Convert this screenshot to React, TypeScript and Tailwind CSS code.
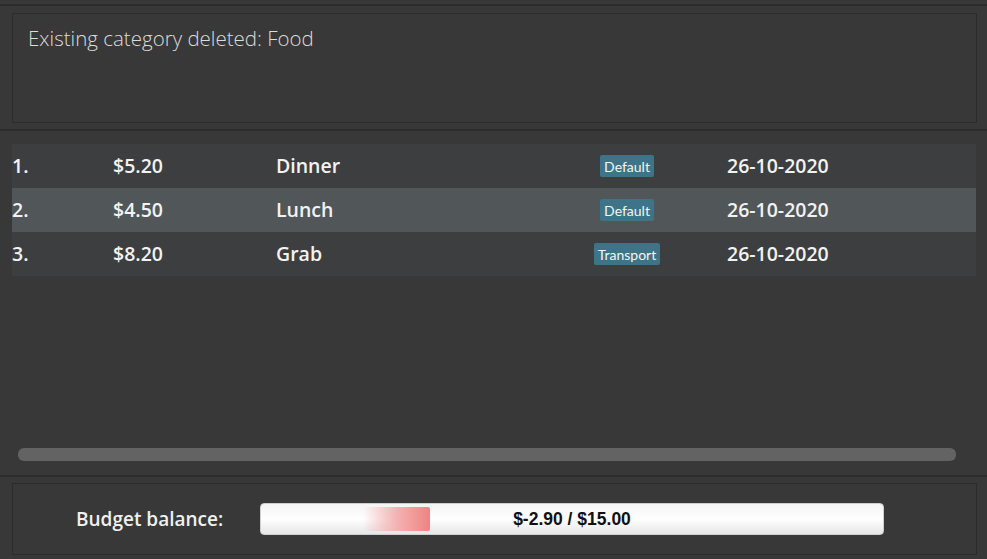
import React from 'react';

const expenses = [
  { idx: '1.', amount: '$5.20', desc: 'Dinner', tag: 'Default', date: '26-10-2020' },
  { idx: '2.', amount: '$4.50', desc: 'Lunch', tag: 'Default', date: '26-10-2020' },
  { idx: '3.', amount: '$8.20', desc: 'Grab', tag: 'Transport', date: '26-10-2020' },
];

const App = () => {
  const selected = 1;

  return (
    <div className="w-[987px] h-[559px] bg-[#383838] flex flex-col overflow-hidden" style={{ fontFamily: '"Open Sans", "Noto Sans", sans-serif' }}>
      <div className="h-[4px] shrink-0" />
      <div className="h-[2px] bg-[#2c2c2c] shrink-0" />

      {/* Result display */}
      <div className="px-[12px] pt-[7px] pb-[6px] shrink-0">
        <div className="w-[965px] h-[110px] border border-[#2c2c2c] px-[15px] pt-[10px]">
          <p className="text-[20.5px] font-light text-[#dcdcdc] leading-[28px]">Existing category deleted: Food</p>
        </div>
      </div>

      <div className="h-[2px] bg-[#2c2c2c] shrink-0" />

      {/* Expense list */}
      <div className="flex-1 flex flex-col px-[12px] pt-[13px]">
        <div className="w-[964px] flex flex-col">
          {expenses.map((e, i) => (
            <div
              key={i}
              className={`h-[44px] flex items-center text-[19.5px] font-semibold text-[#f2f2f2] ${i === selected ? 'bg-[#515658]' : 'bg-[#3d3e40]'}`}
            >
              <span className="w-[101px]">{e.idx}</span>
              <span className="w-[163px]">{e.amount}</span>
              <span className="w-[276px]">{e.desc}</span>
              <span className="w-[150px] flex justify-center">
                <span className="bg-[#3e7488] rounded-[2px] px-[4px] h-[22px] flex items-center text-[14px] font-normal text-[#f5f5f5]" style={{ fontFamily: '"Lato", sans-serif' }}>
                  {e.tag}
                </span>
              </span>
              <span className="ml-[25px]">{e.date}</span>
            </div>
          ))}
        </div>
        <div className="flex-1" />
        <div className="mx-[6px] mb-[14px] w-[938px] h-[13px] rounded-[6px] bg-[#636363]" />
      </div>

      <div className="h-[2px] bg-[#2c2c2c] shrink-0" />

      {/* Budget */}
      <div className="px-[12px] pt-[6px] pb-[4px] shrink-0">
        <div className="w-[965px] h-[72px] border border-[#2c2c2c] flex items-center">
          <span className="ml-[63px] w-[184px] text-[19px] font-semibold text-[#f0f0f0]">Budget balance:</span>
          <div className="relative w-[624px] h-[32px] rounded-[4px] border border-[#cfcfcf] bg-gradient-to-b from-[#f4f4f4] via-white to-[#e6e6e6] flex items-center justify-center">
            <div className="absolute left-[102px] top-[3px] w-[67px] h-[24px] rounded-[2px] bg-gradient-to-r from-[#ffffff00] via-[#f3b3b3] to-[#f08282]" />
            <span className="relative text-[17.5px] font-bold text-[#111]" style={{ fontFamily: '"Liberation Sans", Arial, sans-serif' }}>$-2.90 / $15.00</span>
          </div>
        </div>
      </div>
    </div>
  );
};

export default App;
